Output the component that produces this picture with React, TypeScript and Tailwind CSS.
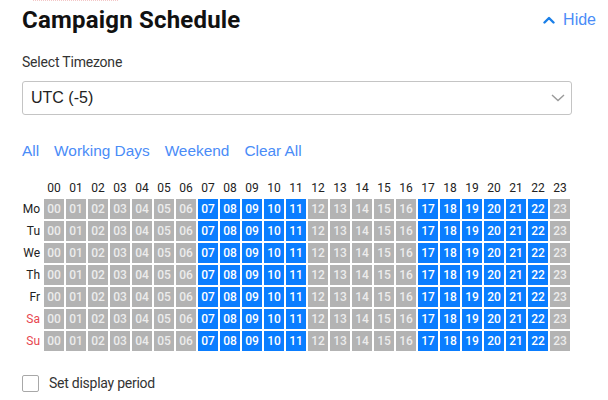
import React from "react"

const days = [
  { label: "Mo", weekend: false },
  { label: "Tu", weekend: false },
  { label: "We", weekend: false },
  { label: "Th", weekend: false },
  { label: "Fr", weekend: false },
  { label: "Sa", weekend: true },
  { label: "Su", weekend: true },
]

const hours = Array.from({ length: 24 }, (_, i) => i)

const isActive = (h: number) => (h >= 7 && h <= 11) || (h >= 17 && h <= 22)

const pad = (n: number) => (n < 10 ? "0" + n : "" + n)

export default function App() {
  return (
    <div className="w-[608px] h-[400px] overflow-hidden bg-white pl-[22px] font-['Roboto',sans-serif] text-[#333]">
      <div className="ml-[11px] w-[85px] h-0 border-t border-dotted border-[#f3c6c6]" />

      <div className="flex w-[574px] items-center justify-between pt-[5px]">
        <h1 className="text-[24px] leading-[28px] font-bold tracking-[0.2px] text-[#111]">Campaign Schedule</h1>
        <button className="flex items-center gap-[8px] font-['Liberation_Sans',sans-serif] text-[16px] leading-[20px] text-[#4a8cf7]">
          <svg width="12" height="8" viewBox="0 0 12 8" fill="none">
            <polyline points="1.5,6.5 6,2 10.5,6.5" stroke="#1a7fe8" strokeWidth="2.4" strokeLinecap="round" strokeLinejoin="round" />
          </svg>
          Hide
        </button>
      </div>

      <div className="mt-[18px] text-[14px] leading-[20px] tracking-[-0.2px] text-[#333]">Select Timezone</div>

      <div className="mt-[9px] flex h-[34px] w-[550px] items-center justify-between rounded-[3px] border border-[#c4c4c4] pl-[8px] pr-[6px]">
        <span className="font-['Liberation_Sans',sans-serif] text-[16px] text-[#222]">UTC (-5)</span>
        <svg width="14" height="8" viewBox="0 0 14 8" fill="none">
          <polyline points="1,1 7,6.5 13,1" stroke="#9a9a9a" strokeWidth="1.4" />
        </svg>
      </div>

      <div className="mt-[26px] flex gap-[15px] font-['Liberation_Sans',sans-serif] text-[15.4px] leading-[20px] text-[#4a8cf7]">
        <span>All</span>
        <span>Working Days</span>
        <span>Weekend</span>
        <span>Clear All</span>
      </div>

      <div className="mt-[19px] flex flex-col">
        <div className="flex h-[16px] pl-[22px] gap-[2px] text-[12px] leading-[16px] text-[#222]">
          {hours.map(h => (
            <div key={h} className="w-[20px] text-center">{pad(h)}</div>
          ))}
        </div>
        <div className="mt-[3px] flex flex-col gap-[2px]">
          {days.map(d => (
            <div key={d.label} className="flex items-center">
              <div className={"w-[18px] text-right text-[12px] " + (d.weekend ? "text-[#e8474f]" : "text-[#222]")}>{d.label}</div>
              <div className="ml-[4px] flex gap-[2px]">
                {hours.map(h => (
                  <div
                    key={h}
                    className={
                      "flex h-[20px] w-[20px] items-center justify-center text-[12px] font-medium " +
                      (isActive(h) ? "bg-[#0a7dff] text-white" : "bg-[#b3b3b3] text-[#ececec]")
                    }
                  >
                    {pad(h)}
                  </div>
                ))}
              </div>
            </div>
          ))}
        </div>
      </div>

      <label className="mt-[23px] flex items-center gap-[10px]">
        <span className="h-[17px] w-[17px] rounded-[2px] border border-[#a8a8a8] bg-white" />
        <span className="text-[14px] leading-[18px] tracking-[-0.25px] text-[#333]">Set display period</span>
      </label>
    </div>
  )
}
